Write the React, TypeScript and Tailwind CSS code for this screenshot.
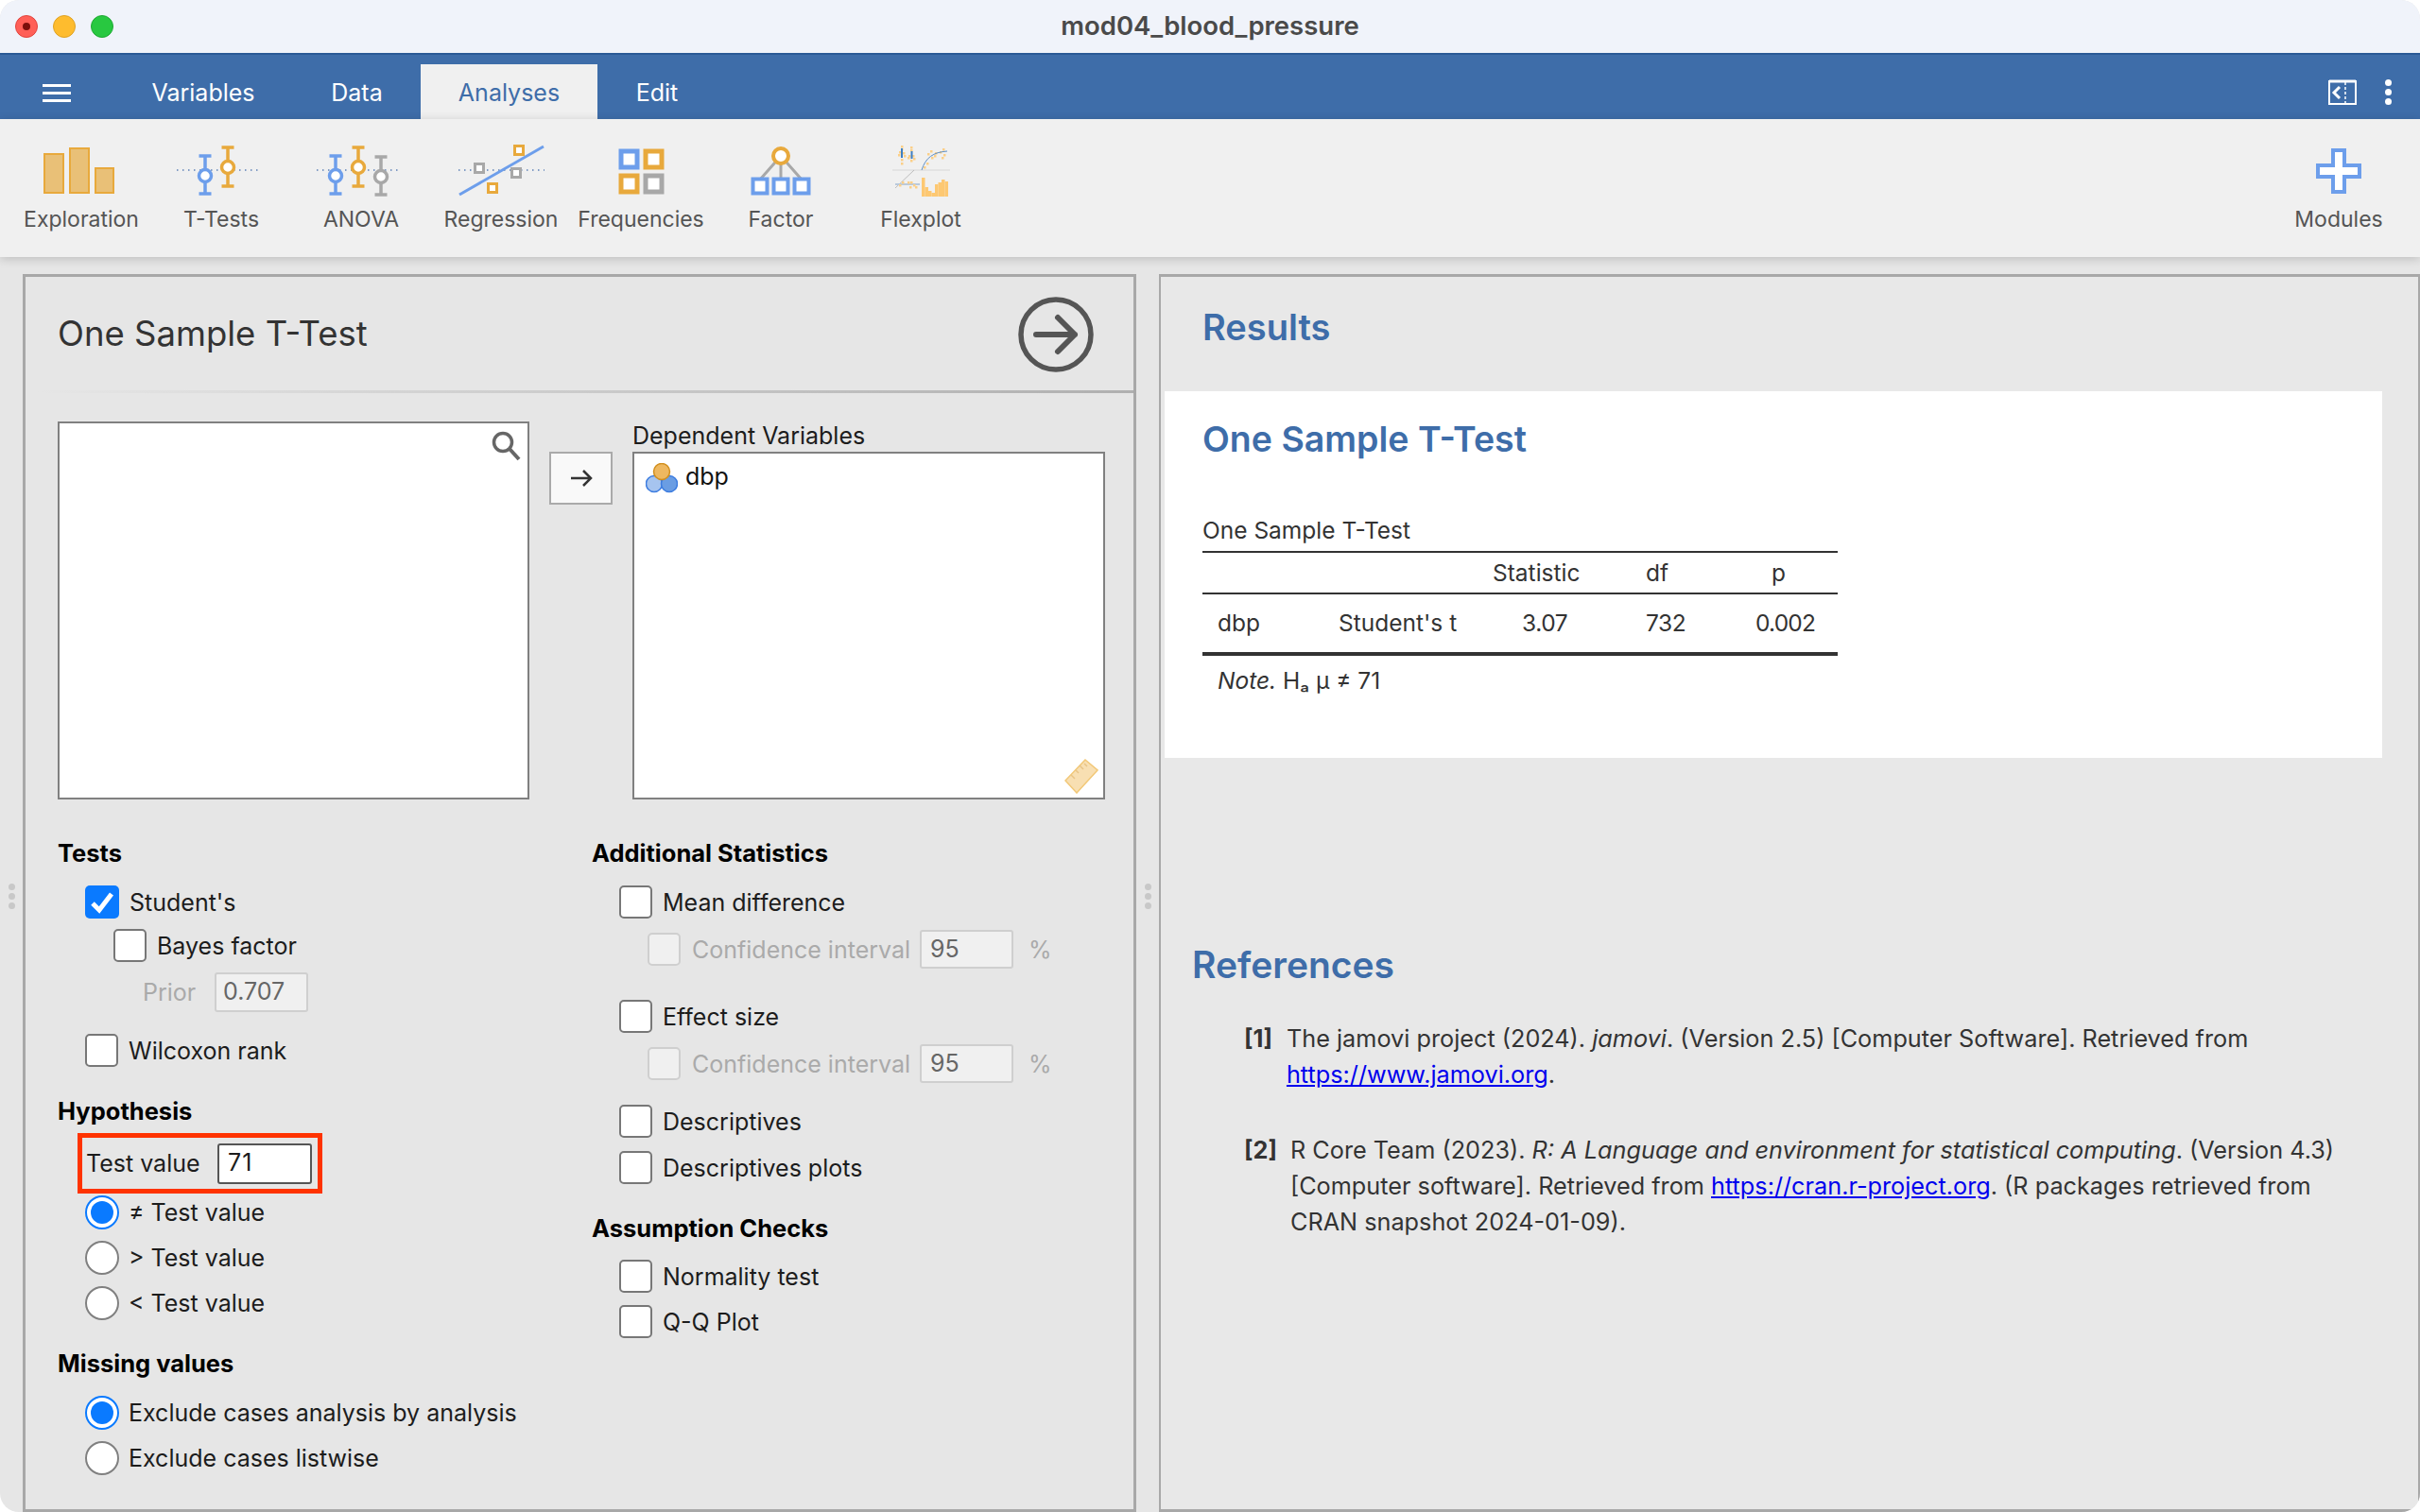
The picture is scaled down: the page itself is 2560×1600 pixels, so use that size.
import React from 'react';

const BLUE = '#6d9eeb';
const ORANGE = '#e8a93c';
const GRAY = '#a8a8a8';

const Whisker = ({ x, top, bottom, cy, color }: { x: number; top: number; bottom: number; cy: number; color: string }) => (
  <g stroke={color} strokeWidth="3.5" fill="none">
    <path d={`M${x} ${top}V${bottom}M${x - 6.5} ${top + 1}H${x + 6.5}M${x - 6.5} ${bottom - 1}H${x + 6.5}`} />
    <circle cx={x} cy={cy} r="6.5" fill="#fff" />
  </g>
);

const Dotted = ({ x1, x2 }: { x1: number; x2: number }) => (
  <path d={`M${x1} 30H${x2}`} stroke="#5b7fb5" strokeWidth="1.5" strokeDasharray="1.5 4.5" />
);

const Sq = ({ cx, cy, size, color, sw }: { cx: number; cy: number; size: number; color: string; sw: number }) => (
  <rect x={cx - size / 2} y={cy - size / 2} width={size} height={size} fill="#fff" stroke={color} strokeWidth={sw} />
);

const ExplorationIcon = () => (
  <g fill="#e9c077" stroke={ORANGE} strokeWidth="2">
    <rect x="35" y="13" width="20" height="41" />
    <rect x="62" y="7" width="20" height="47" />
    <rect x="89" y="28" width="19" height="26" />
  </g>
);

const TTestsIcon = () => (
  <>
    <Dotted x1={27} x2={117} />
    <Whisker x={57} top={14} bottom={56} cy={36} color={BLUE} />
    <Whisker x={81} top={5} bottom={48} cy={27} color={ORANGE} />
  </>
);

const AnovaIcon = () => (
  <>
    <Dotted x1={27} x2={117} />
    <Whisker x={47} top={14} bottom={56} cy={36} color={BLUE} />
    <Whisker x={71} top={5} bottom={48} cy={27} color={ORANGE} />
    <Whisker x={95} top={15} bottom={57} cy={37} color={GRAY} />
  </>
);

const RegressionIcon = () => (
  <>
    <Dotted x1={29} x2={120} />
    <Sq cx={93} cy={9} size={9} color={ORANGE} sw={3} />
    <Sq cx={51} cy={28} size={9} color={GRAY} sw={3} />
    <path d="M30 56L119 5" stroke={BLUE} strokeWidth="3" />
    <Sq cx={90} cy={33} size={9} color={GRAY} sw={3} />
    <Sq cx={65} cy={49} size={9} color={ORANGE} sw={3} />
  </>
);

const FrequenciesIcon = () => (
  <>
    <Sq cx={61.5} cy={18.5} size={17} color={BLUE} sw={5} />
    <Sq cx={87.5} cy={18.5} size={17} color={ORANGE} sw={5} />
    <Sq cx={61.5} cy={44.5} size={17} color={ORANGE} sw={5} />
    <Sq cx={87.5} cy={44.5} size={17} color={GRAY} sw={5} />
  </>
);

const FactorIcon = () => (
  <>
    <path d="M74 15L52 40M74 15V40M74 15L96 40" stroke={GRAY} strokeWidth="3" />
    <Sq cx={52} cy={47} size={15} color={BLUE} sw={4} />
    <Sq cx={74} cy={47} size={15} color={BLUE} sw={4} />
    <Sq cx={96} cy={47} size={15} color={BLUE} sw={4} />
    <circle cx="74" cy="15" r="8" fill="#fff" stroke={ORANGE} strokeWidth="4" />
  </>
);

const FlexplotIcon = () => {
  const bars: [number, number, number][] = [
    [75, 38, 3.5], [78.5, 48, 3.5], [82, 52, 3.5], [85.5, 54, 3.5], [89, 45, 3.5], [92.5, 43, 3.5], [96, 40, 3.5], [99.5, 42, 3.5],
  ];
  const dots: [number, number][] = [
    [54, 5], [54, 8], [52, 11], [56, 12], [51, 14], [57, 15], [54, 19], [54, 23], [64, 6], [64, 9], [62, 15], [66, 15], [61, 17], [67, 18], [64, 20],
    [78, 27], [81, 23], [82, 13], [86, 17], [85, 10], [89, 15], [90, 12], [95, 11], [98, 8], [97, 17], [99, 14], [61, 43], [64, 43], [63, 48], [67, 46], [69, 48], [55, 43], [52, 46],
  ];
  return (
    <>
      <path d="M44 30H105" stroke="#d6d6d6" strokeWidth="1" />
      <path d="M47 49L67 30" stroke="#bdbdbd" strokeWidth="1" />
      <path d="M47 45H73" stroke="#b8c9dc" strokeWidth="2" />
      {dots.map(([x, y]) => (
        <rect key={`${x}-${y}`} x={x - 1} y={y - 1} width="2.5" height="2.5" fill="#fbcf88" />
      ))}
      <path d="M75 30C79 17 87 11 102 10" stroke="#5f8fc4" strokeWidth="1" fill="none" />
      {bars.map(([x, y, w]) => (
        <rect key={x} x={x} y={y} width={w} height={58 - y} fill="#fdc872" />
      ))}
      <rect x="53" y="7" width="2" height="10" fill="#3e7fc4" />
      <rect x="63.5" y="10" width="2" height="8" fill="#3e7fc4" />
    </>
  );
};

const ModulesIcon = () => (
  <path d="M68 9H80V25H96V37H80V53H68V37H52V25H68Z" fill="#fff" stroke={BLUE} strokeWidth="4" />
);

const tools = [
  { label: 'Exploration', icon: <ExplorationIcon /> },
  { label: 'T-Tests', icon: <TTestsIcon /> },
  { label: 'ANOVA', icon: <AnovaIcon /> },
  { label: 'Regression', icon: <RegressionIcon /> },
  { label: 'Frequencies', icon: <FrequenciesIcon /> },
  { label: 'Factor', icon: <FactorIcon /> },
  { label: 'Flexplot', icon: <FlexplotIcon /> },
];

const Tool = ({ label, icon }: { label: string; icon: React.ReactNode }) => (
  <div className="w-[148px] flex flex-col items-center pt-[24px]">
    <svg width="148" height="60" viewBox="0 0 148 60">{icon}</svg>
    <div className="mt-[8px] text-[23px] leading-[28px] text-[#555] whitespace-nowrap">{label}</div>
  </div>
);

const Tab = ({ label, width, active }: { label: string; width: string; active?: boolean }) => (
  <div
    className={`${width} h-[58px] flex items-center justify-center text-[25px] pt-[3px] ${
      active ? 'bg-[#f0f0f0] text-[#3e6da9]' : 'text-white'
    }`}
  >
    {label}
  </div>
);

const Check = ({ checked, disabled }: { checked?: boolean; disabled?: boolean }) => {
  if (checked) {
    return (
      <div className="w-[36px] h-[35px] shrink-0 rounded-[5px] bg-[#0a7aff] flex items-center justify-center">
        <svg width="28" height="26" viewBox="0 0 28 26">
          <path d="M4 14L11 21L24 4" fill="none" stroke="#fff" strokeWidth="5" />
        </svg>
      </div>
    );
  }
  return (
    <div
      className={
        disabled
          ? 'w-[35px] h-[35px] shrink-0 rounded-[5px] border-2 border-[#cfcfcf] bg-[#f0f0f0]'
          : 'w-[35px] h-[35px] shrink-0 rounded-[5px] border-2 border-[#777] bg-white'
      }
    />
  );
};

const Radio = ({ checked }: { checked?: boolean }) => (
  <div
    className={
      checked
        ? 'w-[36px] h-[36px] shrink-0 rounded-full border-2 border-[#0a7aff] bg-white flex items-center justify-center'
        : 'w-[36px] h-[36px] shrink-0 rounded-full border-2 border-[#808080] bg-white flex items-center justify-center'
    }
  >
    {checked && <div className="w-[24px] h-[24px] rounded-full bg-[#0a7aff]" />}
  </div>
);

const SectionTitle = ({ children, className }: { children: React.ReactNode; className?: string }) => (
  <div className={`h-[32px] leading-[32px] text-[25.5px] font-bold text-black ${className ?? ''}`}>{children}</div>
);

const Label = ({ children, muted }: { children: React.ReactNode; muted?: boolean }) => (
  <span className={muted ? 'text-[25px] leading-[32px] text-[#aaa]' : 'text-[25px] leading-[32px] text-[#1c1c1c]'}>
    {children}
  </span>
);

const CheckRow = ({ label, checked, className }: { label: string; checked?: boolean; className: string }) => (
  <div className={`flex items-center gap-[11px] ${className}`}>
    <Check checked={checked} />
    <Label>{label}</Label>
  </div>
);

const RadioRow = ({ label, checked, className }: { label: string; checked?: boolean; className: string }) => (
  <div className={`flex items-center gap-[10px] pl-[29px] ${className}`}>
    <Radio checked={checked} />
    <Label>{label}</Label>
  </div>
);

const ConfidenceRow = ({ className }: { className: string }) => (
  <div className={`flex items-center pl-[59px] ${className}`}>
    <Check disabled />
    <div className="ml-[12px] w-[241px] whitespace-nowrap">
      <Label muted>Confidence interval</Label>
    </div>
    <div className="w-[99px] h-[41px] rounded-[3px] border-2 border-[#cfcfcf] bg-[#f0f0f0] pl-[9px] flex items-center text-[25px] text-[#666]">
      95
    </div>
    <div className="ml-[16px]">
      <Label muted>%</Label>
    </div>
  </div>
);

const SplitterDots = () => (
  <div className="w-[24px] shrink-0 flex flex-col items-center justify-center gap-[3px] pt-[6px]">
    <div className="w-[7px] h-[7px] rounded-full bg-[#c8c8c8]" />
    <div className="w-[7px] h-[7px] rounded-full bg-[#c8c8c8]" />
    <div className="w-[7px] h-[7px] rounded-full bg-[#c8c8c8]" />
  </div>
);

const OptionsPanel = () => (
  <div className="w-[1178px] shrink-0 border-[3px] border-[#a8a8a8] bg-[#e6e6e6]">
    <div className="h-[120px] pl-[34px] pr-[42px] flex items-center justify-between">
      <div className="text-[36.5px] text-[#333]">One Sample T-Test</div>
      <svg width="80" height="80" viewBox="0 0 80 80" className="mt-[1px]">
        <circle cx="40" cy="40" r="37" fill="none" stroke="#555" strokeWidth="5.5" />
        <path d="M19 40H60M42 22L60 40L42 58" fill="none" stroke="#555" strokeWidth="6" strokeLinecap="round" strokeLinejoin="round" />
      </svg>
    </div>
    <div className="h-[3px] ml-[13px] bg-gradient-to-r from-[#e6e6e6] to-[#b0b0b0]" />

    <div className="mt-[30px] ml-[34px] flex items-start">
      <div className="relative w-[499px] h-[400px] bg-white border-2 border-[#808080]">
        <svg width="32" height="32" viewBox="0 0 32 32" className="absolute top-[8px] right-[6px]">
          <circle cx="12" cy="12" r="9.5" fill="none" stroke="#666" strokeWidth="3.5" />
          <path d="M19 19L29 30" stroke="#666" strokeWidth="4" />
        </svg>
      </div>
      <div className="ml-[21px] mt-[32px] w-[67px] h-[56px] bg-[#f9f9f9] border-2 border-[#aaa] flex items-center justify-center">
        <svg width="24" height="20" viewBox="0 0 24 20">
          <path d="M1 10H22M14 2L22 10L14 18" fill="none" stroke="#333" strokeWidth="2.5" />
        </svg>
      </div>
      <div className="ml-[21px] w-[500px]">
        <div className="h-[32px] leading-[30px] text-[25px] text-[#1c1c1c]">Dependent Variables</div>
        <div className="relative h-[368px] bg-white border-2 border-[#808080] pl-[12px] pt-[8px] flex items-start gap-[8px]">
          <svg width="34" height="32" viewBox="0 0 34 32" className="mt-[2px]">
            <circle cx="9" cy="22" r="8.5" fill="#a6c4ef" stroke="#3d7de0" strokeWidth="1.5" />
            <circle cx="25" cy="22" r="8.5" fill="#6a9de3" stroke="#3d7de0" strokeWidth="1.5" />
            <circle cx="17" cy="9" r="8.5" fill="#eeb860" stroke="#d28f1e" strokeWidth="1.5" />
          </svg>
          <span className="text-[25px] leading-[32px] text-[#111]">dbp</span>
          <svg width="36" height="37" viewBox="-1 -1 36 37" className="absolute right-[5px] bottom-[4px]">
            <path d="M21 0L34 11L12 35L0 22Z" fill="#f8dfb2" stroke="#f2c878" strokeWidth="1.5" />
            <path d="M6 16L10 20M11 11L14 14M15 6L19 10M20 4L23 7" stroke="#e9c486" strokeWidth="1.5" />
          </svg>
        </div>
      </div>
    </div>

    <div className="mt-[41px] ml-[34px] grid grid-cols-[565px_1fr]">
      <div>
        <SectionTitle>Tests</SectionTitle>
        <CheckRow label="Student's" checked className="mt-[18px] pl-[29px]" />
        <CheckRow label="Bayes factor" className="mt-[11px] pl-[59px]" />
        <div className="mt-[11px] pl-[90px] h-[42px] flex items-center">
          <div className="w-[76px]">
            <Label muted>Prior</Label>
          </div>
          <div className="w-[99px] h-[42px] rounded-[3px] border-2 border-[#cfcfcf] bg-[#f0f0f0] pl-[7px] flex items-center text-[25px] text-[#666]">
            0.707
          </div>
        </div>
        <CheckRow label="Wilcoxon rank" className="mt-[23px] pl-[29px]" />

        <SectionTitle className="mt-[31px]">Hypothesis</SectionTitle>
        <div className="mt-[7px] ml-[21px] w-[259px] h-[64px] border-[5px] border-[#ff3300] pl-[4px] flex items-center">
          <div className="w-[139px]">
            <Label>Test value</Label>
          </div>
          <div className="w-[100px] h-[43px] rounded-[3px] border-2 border-[#555] bg-white pl-[9px] flex items-center text-[25px] tracking-[1px] text-[#1c1c1c]">
            71
          </div>
        </div>
        <RadioRow label="≠ Test value" checked className="mt-[2px]" />
        <RadioRow label="> Test value" className="mt-[12px]" />
        <RadioRow label="< Test value" className="mt-[12px]" />

        <SectionTitle className="mt-[30px]">Missing values</SectionTitle>
        <RadioRow label="Exclude cases analysis by analysis" checked className="mt-[18px]" />
        <RadioRow label="Exclude cases listwise" className="mt-[12px]" />
      </div>

      <div>
        <SectionTitle>Additional Statistics</SectionTitle>
        <CheckRow label="Mean difference" className="mt-[18px] pl-[29px]" />
        <ConfidenceRow className="mt-[12px]" />
        <CheckRow label="Effect size" className="mt-[33px] pl-[29px]" />
        <ConfidenceRow className="mt-[12px]" />
        <CheckRow label="Descriptives" className="mt-[23px] pl-[29px]" />
        <CheckRow label="Descriptives plots" className="mt-[14px] pl-[29px]" />
        <SectionTitle className="mt-[31px]">Assumption Checks</SectionTitle>
        <CheckRow label="Normality test" className="mt-[17px] pl-[29px]" />
        <CheckRow label="Q-Q Plot" className="mt-[13px] pl-[29px]" />
      </div>
    </div>
  </div>
);

const ResultsPanel = () => (
  <div className="flex-1 border-l-2 border-t-[3px] border-b-[3px] border-r-2 border-[#a8a8a8] bg-[#e8e8e8]">
    <div className="h-[121px] pl-[44px] pt-[35px] text-[38px] leading-[36px] font-semibold text-[#3e6da9]">Results</div>
    <div className="ml-[4px] w-[1288px] h-[388px] bg-white pl-[40px] pt-[31px]">
      <div className="text-[37.5px] leading-[40px] font-semibold text-[#3e6da9]">One Sample T-Test</div>
      <div className="mt-[61px] w-[672px] text-[24.5px] text-[#333]">
        <div className="h-[37px] leading-[30px]">One Sample T-Test</div>
        <div className="h-[46px] border-t-2 border-b-2 border-[#333] flex items-center">
          <span className="w-[307px]" />
          <span className="w-[162px]">Statistic</span>
          <span className="w-[133px]">df</span>
          <span>p</span>
        </div>
        <div className="h-[65px] border-b-4 border-[#333] flex items-center">
          <span className="w-[144px] pl-[16px]">dbp</span>
          <span className="w-[194px]">Student's t</span>
          <span className="w-[131px] tracking-[-0.4px]">3.07</span>
          <span className="w-[116px] tracking-[-0.4px]">732</span>
          <span className="tracking-[-0.8px]">0.002</span>
        </div>
        <div className="h-[52px] pl-[16px] flex items-center">
          <span>
            <em>Note.</em> Hₐ µ ≠ 71
          </span>
        </div>
      </div>
    </div>
    <div className="mt-[197px] ml-[33px] text-[39px] leading-[44px] font-semibold text-[#3e6da9]">References</div>
    <div className="mt-[37px] ml-[88px] flex gap-[15px] text-[25.25px] leading-[38px] text-[#333]">
      <span className="font-bold">[1]</span>
      <span>
        The jamovi project (2024). <em>jamovi</em>. (Version 2.5) [Computer Software]. Retrieved from
        <br />
        <span className="text-[#0000ee] underline">https://www.jamovi.org</span>.
      </span>
    </div>
    <div className="mt-[42px] ml-[88px] flex gap-[14px] text-[25.25px] leading-[38px] text-[#333]">
      <span className="font-bold">[2]</span>
      <span>
        R Core Team (2023). <em>R: A Language and environment for statistical computing</em>. (Version 4.3)
        <br />
        [Computer software]. Retrieved from <span className="text-[#0000ee] underline">https://cran.r-project.org</span>. (R packages retrieved from
        <br />
        CRAN snapshot 2024-01-09).
      </span>
    </div>
  </div>
);

export default function App() {
  return (
    <div className="w-[2560px] h-[1600px] bg-white font-[Inter,sans-serif]">
      <div className="w-full h-full rounded-[20px] overflow-hidden bg-[#e6e6e6] flex flex-col">
        <div className="h-[58px] shrink-0 bg-[#f0f3fa] border-b-2 border-[#2b5a96] grid grid-cols-[1fr_auto_1fr] items-center">
          <div className="pl-[16px] flex gap-[16px]">
            <div className="w-[24px] h-[24px] rounded-full bg-[#ff5f57] border border-[#e0443e] flex items-center justify-center">
              <div className="w-[8px] h-[8px] rounded-full bg-[#7a0f0b]" />
            </div>
            <div className="w-[24px] h-[24px] rounded-full bg-[#febc2e] border border-[#dea123]" />
            <div className="w-[24px] h-[24px] rounded-full bg-[#28c840] border border-[#1fa833]" />
          </div>
          <div className="text-[27.5px] font-semibold text-[#4a4a4a]">mod04_blood_pressure</div>
          <div />
        </div>

        <div className="h-[68px] shrink-0 bg-[#3e6da9] flex items-end">
          <div className="w-[120px] h-[58px] pl-[45px] flex flex-col justify-center gap-[5px] pt-[2px]">
            <div className="w-[30px] h-[3px] bg-white" />
            <div className="w-[30px] h-[3px] bg-white" />
            <div className="w-[30px] h-[3px] bg-white" />
          </div>
          <Tab label="Variables" width="w-[190px]" />
          <Tab label="Data" width="w-[135px]" />
          <Tab label="Analyses" width="w-[187px]" active />
          <Tab label="Edit" width="w-[126px]" />
          <div className="ml-auto h-[58px] flex items-center pr-[30px] gap-[30px]">
            <svg width="30" height="27" viewBox="0 0 30 27">
              <path d="M1 2H29V26H1Z" fill="none" stroke="#fff" strokeWidth="2" />
              <path d="M1 2H29" stroke="#fff" strokeWidth="3" />
              <path d="M18 3V26" stroke="#fff" strokeWidth="1.5" strokeDasharray="3 2" />
              <path d="M12 8L6 14L12 20" fill="none" stroke="#fff" strokeWidth="3" />
            </svg>
            <div className="flex flex-col gap-[3px]">
              <div className="w-[7px] h-[7px] rounded-full bg-white" />
              <div className="w-[7px] h-[7px] rounded-full bg-white" />
              <div className="w-[7px] h-[7px] rounded-full bg-white" />
            </div>
          </div>
        </div>

        <div className="relative z-10 h-[146px] shrink-0 bg-[#f0f0f0] pl-[12px] pr-[12px] flex shadow-[0_2px_10px_rgba(0,0,0,0.18)]">
          {tools.map((t) => (
            <Tool key={t.label} label={t.label} icon={t.icon} />
          ))}
          <div className="ml-auto">
            <Tool label="Modules" icon={<ModulesIcon />} />
          </div>
        </div>

        <div className="flex-1 min-h-0 pt-[18px] flex">
          <SplitterDots />
          <OptionsPanel />
          <SplitterDots />
          <ResultsPanel />
        </div>
      </div>
    </div>
  );
}
